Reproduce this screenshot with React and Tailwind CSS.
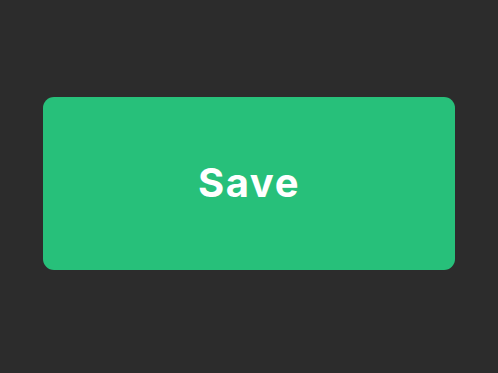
export default function App() {
  return (
    <div className="flex h-[373px] w-[498px] items-center justify-center bg-[#2c2c2c]">
      <button className="mb-[7px] flex h-[173px] w-[412px] items-center justify-center rounded-[11px] bg-[#27c07a] text-[40px] font-bold tracking-[0.04em] text-white [font-family:Inter,'Noto_Sans',sans-serif]">
        Save
      </button>
    </div>
  );
}
